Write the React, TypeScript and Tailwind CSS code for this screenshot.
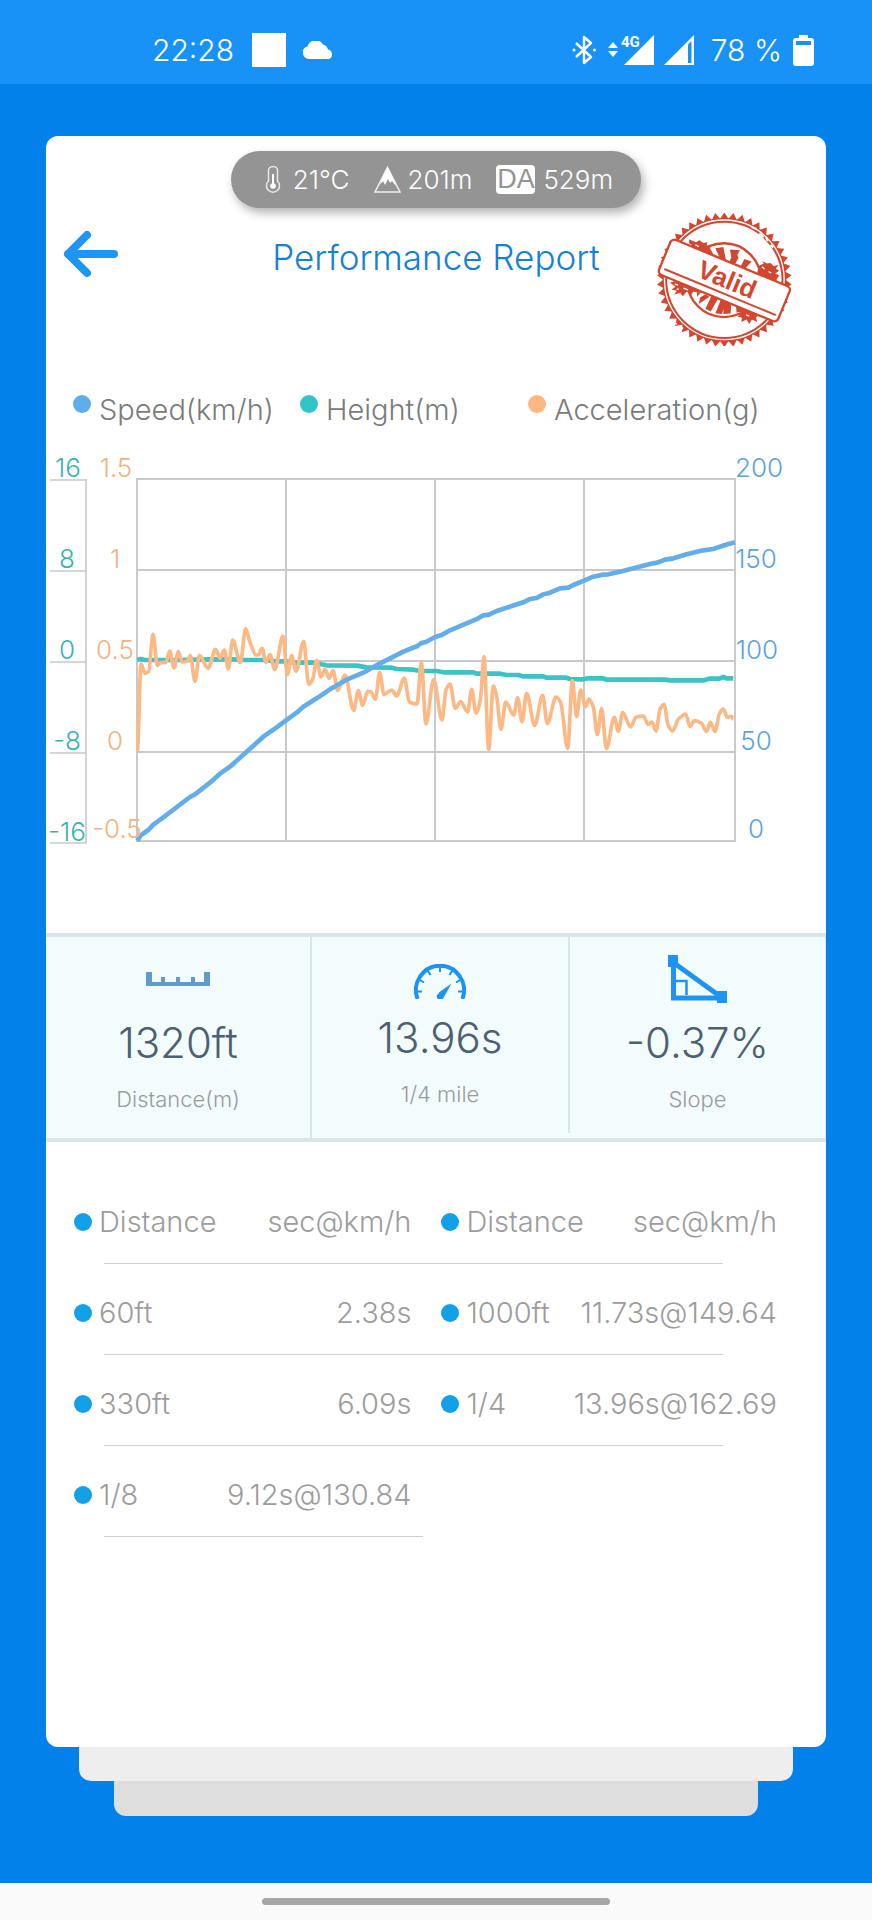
import React from "react";

type Point = [number, number];

const ACCELERATION: Point[] = [
  [22, 455], [33, 192], [45, 220], [56, 214], [69, 102], [82, 196], [92, 188], [108, 187], [119, 153], [132, 204],
  [145, 155], [157, 186], [172, 183], [181, 167], [195, 244], [208, 166], [234, 205], [257, 148], [270, 175],
  [283, 150], [295, 207], [308, 120], [331, 188], [347, 86], [360, 127], [378, 165], [386, 164], [396, 145],
  [408, 187], [420, 164], [434, 209], [459, 108], [472, 224], [485, 167], [498, 214], [521, 124], [536, 253],
  [548, 238], [560, 181], [573, 231], [585, 208], [598, 235], [609, 212], [623, 271], [645, 225], [671, 331],
  [685, 272], [698, 316], [713, 274], [723, 276], [736, 298], [749, 217], [762, 283], [785, 270], [800, 288],
  [823, 234], [838, 306], [861, 312], [874, 187], [888, 372], [911, 239], [936, 360], [948, 270], [960, 252],
  [976, 325], [992, 305], [1013, 336], [1025, 268], [1038, 339], [1051, 300], [1062, 170], [1076, 449], [1090, 258],
  [1100, 290], [1113, 388], [1127, 306], [1151, 345], [1163, 293], [1176, 365], [1190, 280], [1214, 376],
  [1238, 286], [1252, 371], [1278, 291], [1292, 308], [1313, 445], [1327, 242], [1340, 350], [1352, 270],
  [1366, 320], [1377, 297], [1390, 322], [1402, 404], [1415, 325], [1429, 446], [1453, 352], [1465, 394],
  [1478, 338], [1502, 381], [1518, 352], [1540, 348], [1554, 373], [1566, 366], [1578, 393], [1590, 328],
  [1602, 313], [1614, 374], [1628, 393], [1645, 358], [1667, 342], [1680, 380], [1693, 362], [1715, 370],
  [1729, 395], [1741, 367], [1755, 394], [1768, 342], [1780, 327], [1792, 352], [1804, 349], [1810, 357],
];

const HEIGHT: Point[] = [
  [22, 179], [32, 177], [45, 180], [150, 180], [240, 178], [320, 178], [345, 180], [400, 180], [440, 184], [468, 184],
  [490, 188], [550, 188], [590, 196], [680, 197], [710, 202], [785, 203], [800, 207], [850, 209], [870, 213],
  [920, 213], [940, 217], [1030, 217], [1040, 221], [1110, 221], [1130, 225], [1165, 225], [1178, 229],
  [1238, 229], [1250, 233], [1308, 233], [1320, 237], [1360, 238], [1375, 235], [1418, 235], [1430, 239],
  [1605, 239], [1620, 241], [1722, 241], [1738, 236], [1768, 236], [1780, 231], [1790, 235], [1810, 235],
];

const SPEED: Point[] = [
  [22, 722], [32, 706], [55, 690], [70, 674], [100, 652], [180, 591], [195, 583], [240, 548], [270, 521], [300, 500],
  [345, 460], [400, 410], [440, 382], [468, 361], [505, 334], [520, 320], [560, 295], [600, 268], [650, 239],
  [700, 218], [745, 193], [820, 155], [862, 138], [874, 129], [888, 126], [915, 111], [935, 105], [960, 91],
  [1045, 55], [1060, 46], [1077, 44], [1100, 33], [1180, 7], [1200, -3], [1220, -6], [1240, -17], [1255, -20],
  [1290, -35], [1315, -37], [1330, -45], [1362, -58], [1390, -70], [1418, -76], [1435, -77], [1470, -85],
  [1560, -108], [1582, -112], [1605, -121], [1630, -125], [1670, -137], [1720, -149], [1750, -153],
  [1785, -165], [1815, -173],
];

/* Monotone cubic through the samples: peaks stay peaks, nothing overshoots. */
function smooth(points: Point[]): string {
  const slope = (a: Point, b: Point) => (b[1] - a[1]) / (b[0] - a[0]);
  const tangents = points.map((p, i) => {
    if (i === 0 || i === points.length - 1) return 0;
    const s0 = slope(points[i - 1], p);
    const s1 = slope(p, points[i + 1]);
    return s0 * s1 <= 0 ? 0 : (2 * s0 * s1) / (s0 + s1);
  });
  let d = `M${points[0][0]} ${points[0][1]}`;
  for (let i = 1; i < points.length; i++) {
    const [x0, y0] = points[i - 1];
    const [x1, y1] = points[i];
    const h = (x1 - x0) / 3;
    d += `C${x0 + h} ${y0 + tangents[i - 1] * h} ${x1 - h} ${y1 - tangents[i] * h} ${x1} ${y1}`;
  }
  return d;
}

function straight(points: Point[]): string {
  return "M" + points.map((p) => p.join(" ")).join("L");
}

const HEIGHT_TICKS: [string, number, number][] = [
  ["16", 68, 477], ["8", 67, 568], ["0", 67, 659], ["-8", 67, 750], ["-16", 67, 841],
];
const G_TICKS: [string, number, number][] = [
  ["1.5", 116, 477], ["1", 115, 568], ["0.5", 115, 659], ["0", 115, 750], ["-0.5", 117, 838],
];
const SPEED_TICKS: [string, number, number][] = [
  ["200", 759, 477], ["150", 756, 568], ["100", 757, 659], ["50", 756, 750], ["0", 756, 838],
];

function Chart() {
  return (
    <svg viewBox="46 450 780 400" className="mt-5 block w-full" role="img" aria-label="Speed, height and acceleration">
      <g stroke="#c9c9c9" strokeWidth="2" fill="none">
        <path d="M137 479H735M137 570H735M137 661H735M137 752H735M137 841H736" />
        <path d="M137 478V842M286 479V841M435 479V841M584 479V841M735 478V842" />
        <path d="M50 480H86M50 571H86M50 662H86M50 753H86M50 843H87M86 479V843" strokeWidth="1.6" />
      </g>
      <g transform="translate(130 600) scale(0.33333)" fill="none" strokeLinejoin="round">
        <path d={straight(HEIGHT)} stroke="#3cc3c3" strokeWidth="14" />
        <path d={smooth(ACCELERATION)} stroke="#fcb985" strokeWidth="11" />
        <path d={straight(SPEED)} stroke="#63ade8" strokeWidth="14" />
      </g>
      <g fontSize="26" textAnchor="middle" fontWeight="300">
        {HEIGHT_TICKS.map(([t, x, y]) => (
          <text key={t} x={x} y={y} fill="#37b4ac">{t}</text>
        ))}
        {G_TICKS.map(([t, x, y]) => (
          <text key={t} x={x} y={y} fill="#f3b27e">{t}</text>
        ))}
        {SPEED_TICKS.map(([t, x, y]) => (
          <text key={t} x={x} y={y} fill="#5ba3dc">{t}</text>
        ))}
      </g>
    </svg>
  );
}

function polar(r: number, deg: number): string {
  const a = (deg * Math.PI) / 180;
  return `${(253 + r * Math.cos(a)).toFixed(1)} ${(237 + r * Math.sin(a)).toFixed(1)}`;
}

const TEETH = 46;
const teethPath =
  "M" +
  Array.from({ length: TEETH }, (_, i) => {
    const a = (i * 360) / TEETH;
    return `${polar(184, a)}L${polar(203, a + 180 / TEETH)}`;
  }).join("L") +
  "Z";

function Stamp() {
  const red = "#d2472f";
  return (
    <svg viewBox="48 36 411 400" className="h-[133px] w-[137px]" role="img" aria-label="Valid">
      <path d={teethPath} fill={red} />
      <circle cx="253" cy="237" r="186" fill={red} />
      <circle cx="253" cy="237" r="180" fill="none" stroke="#fff" strokeWidth="4" />
      <circle cx="253" cy="237" r="172" fill="#fff" />
      <circle cx="252" cy="238" r="111" fill="none" stroke={red} strokeWidth="7" />
      <g fill={red}>
        <path d="M226 142l24-4 8 40-16 0zM270 146l30 2-8 14 4 8-12 22-18-4 8-18zM313 174l22 8-24 26-12-4zM196 146l12-8 16 30-14-6z" />
        <path d="M180 290l16-10 12 8-32 22zM214 286l20 8-22 38-16-8zM242 298l16 4-12 38-20-2zM252 302l22 2 -2 34-22 2zM170 276l14-4-12 16zM288 316l14 4 2 12-14 4z" />
        <path d="M148 116l20 8 10-6 12 8 12-2-2 10 14 4-16 8 18 18-26-6-20-10-22-10 8-6-10-6z" />
        <path d="M352 214l6-20 14-6-6-8 16 8 10-2 10 10 14-4-8 12 10 6-12 8 12 6-8 12 4 12-30-10z" />
        <path d="M90 246l20-8 44 16 30 12-10 10-14-4-8 12-12-12-12 14-8-10-18 6 8-12-16-4 12-8z" />
        <path d="M300 322l40 6 18 14-10 8 4 14-16-8-8 14-8-14-16 8 2-14-14-2 10-8z" />
      </g>
      <path d="M104 250l10 3M130 262l14 5M166 132l10 5M366 198l8 6M386 212l8 5M318 342l10 4M110 264l6 2" stroke="#fff" strokeWidth="4" />
      <path d="M335 78l14 6M358 98l14 10M378 108l6 12M392 132l8 8M100 366l10 4M122 388l6-8" stroke="#fff" strokeWidth="6" />
      <g transform="rotate(22.5 253 239)">
        <rect x="59" y="182" width="388" height="114" rx="13" fill="#fff" stroke={red} strokeWidth="7" />
        <path d="M73 276H436" stroke={red} strokeWidth="6" />
        <text x="260" y="260" textAnchor="middle" fontFamily="'Liberation Sans', Arial, sans-serif" fontWeight="700" fontSize="78" fill={red}>
          Valid
        </text>
      </g>
    </svg>
  );
}

function StatusBar() {
  return (
    <header className="flex h-[84px] items-center justify-between bg-[#1992f7] pr-[58px] pl-[152px] pt-4 text-[30px] text-white">
      <div className="flex items-center">
        <time>22:28</time>
        <span className="ml-[18px] size-[34px] bg-white" />
        <svg viewBox="0 0 32 18" className="ml-4 h-[18px] w-8" fill="#fff" aria-hidden="true">
          <path d="M7 18a6.5 6.500 0 0 1-1.500-12.700A8.500 8.500 0 0 1 21 3.500a7 7 0 0 1 5 5A5 5 0 0 1 27 18z" />
        </svg>
      </div>
      <div className="flex items-center">
        <svg viewBox="0 0 24 30" className="h-[30px] w-6" fill="none" stroke="#fff" strokeWidth="2.400" aria-hidden="true">
          <path d="M4 8l15 14-7 6V2l7 6L4 22" strokeLinejoin="round" />
          <circle cx="2" cy="15" r="1.500" fill="#fff" stroke="none" />
          <circle cx="22.500" cy="15" r="1.500" fill="#fff" stroke="none" />
        </svg>
        <svg viewBox="0 -4 46 34" className="-mt-1 ml-3 h-[34px] w-[46px]" fill="#fff" aria-label="4G">
          <path d="M0 13l5-6 5 6zM0 16h10l-5 6zM16 30L46 0V30z" />
          <text x="13" y="12" fontSize="15" fontWeight="700" fontFamily="Roboto, sans-serif">4G</text>
        </svg>
        <svg viewBox="0 0 30 30" className="ml-[10px] size-[30px]" aria-hidden="true">
          <path d="M0 30L30 0V30z" fill="#fff" />
          <path d="M24 9.500l3.500-3.500V28H24z" fill="#1992f7" />
        </svg>
        <span className="ml-[17px]">78 %</span>
        <svg viewBox="0 0 21 31" className="ml-[11px] h-[31px] w-[21px]" aria-hidden="true">
          <path d="M6 0h9v3h3a3 3 0 0 1 3 3v22a3 3 0 0 1-3 3H3a3 3 0 0 1-3-3V6a3 3 0 0 1 3-3h3z" fill="#fff" />
          <path d="M3 6h15v4H3z" fill="#1992f7" />
        </svg>
      </div>
    </header>
  );
}

function Conditions() {
  return (
    <div className="mx-auto mt-[15px] flex h-[57px] items-center rounded-full bg-[#949494] pr-7 pl-[34px] text-[26px] text-white shadow-[3px_5px_10px_rgba(0,0,0,0.3)]">
      <svg viewBox="0 0 16 27" className="mr-3 h-[27px] w-4" fill="none" stroke="#e8e8e8" strokeWidth="1.500" aria-hidden="true">
        <path d="M3.500 4.500a4.500 4 0 0 1 9 0V15a6.500 6.500 0 1 1-9 0z" />
        <path d="M8 8v12" strokeWidth="2" stroke="#fff" />
        <circle cx="8" cy="20" r="2.800" fill="#fff" stroke="none" />
      </svg>
      <span>21℃</span>
      <svg viewBox="0 0 27 27" className="mr-[7px] ml-6 size-[27px]" aria-hidden="true">
        <path d="M13.500 1.500L26 26H1z" fill="none" stroke="#eee" strokeWidth="1.600" />
        <path d="M13.500 1L20 14l2 6-4-5-2 2-2-4-3 6-2-4-3 4 2-6z" fill="#fff" />
      </svg>
      <span>201m</span>
      <span className="mr-2 ml-6 flex h-[29px] w-[39px] items-center justify-center rounded-[4px] bg-white font-['Liberation_Sans',Arial,sans-serif] text-[27px] font-normal text-[#949494]">
        DA
      </span>
      <span>529m</span>
    </div>
  );
}

function LegendItem({ dot, label }: { dot: string; label: string }) {
  return (
    <li className="flex items-start gap-2 whitespace-nowrap">
      <span className={`mt-[5px] size-[18px] shrink-0 rounded-full ${dot}`} />
      <span className="leading-10">{label}</span>
    </li>
  );
}

function Stat({ icon, value, label, className }: { icon: React.ReactNode; value: string; label: string; className: string }) {
  return (
    <div className={`flex flex-col items-center ${className}`}>
      {icon}
      <div className="text-[42px] leading-[52px] text-[#4e6070]">{value}</div>
      <div className="mt-4 text-[22px] leading-7 text-[#9b9b9b]">{label}</div>
    </div>
  );
}

const RESULTS = [
  ["60ft", "2.38s", "1000ft", "11.73s@149.64"],
  ["330ft", "6.09s", "1/4", "13.96s@162.69"],
  ["1/8", "9.12s@130.84"],
];

function Name({ children }: { children: React.ReactNode }) {
  return (
    <span className="flex items-center gap-[7px]">
      <span className="size-[18px] shrink-0 rounded-full bg-[#12a0e6]" />
      {children}
    </span>
  );
}

function ResultCells({ cells, head }: { cells: string[]; head?: boolean }) {
  return (
    <>
      {cells.map((c, i) => {
        const cls =
          i % 2 ? "pt-[6px] text-right font-light" : i === 2 ? "pt-[6px] pl-[30px] text-left font-light" : "pt-[6px] text-left font-light";
        const body = i % 2 ? c : <Name>{c}</Name>;
        return head ? <th key={i} scope="col" className={cls}>{body}</th> : <td key={i} className={cls}>{body}</td>;
      })}
    </>
  );
}

const ROW = "relative h-[91px] after:absolute after:bottom-0 after:left-[30px] after:h-px after:bg-[#cfcfcf]";

export default function App() {
  return (
    <div className="flex min-h-screen flex-col bg-[#0281ea] font-['Inter','Liberation_Sans',sans-serif] font-light">
      <StatusBar />
      <main className="mx-[46px] mt-[52px] flex flex-1 flex-col rounded-xl bg-white">
        <Conditions />
        <div className="mt-[5px] grid grid-cols-[1fr_auto_1fr] items-start">
          <button type="button" aria-label="Back" className="mt-[17px] ml-[17px] justify-self-start">
            <svg viewBox="0 0 56 48" className="h-12 w-14" fill="none" stroke="#1f95f5" strokeWidth="8" strokeLinecap="round" strokeLinejoin="round" aria-hidden="true">
              <path d="M24 5L5 24l19 19M5 24h46" />
            </svg>
          </button>
          <h1 className="mt-6 text-[35px] leading-[40px] text-[#1580d8]">Performance Report</h1>
          <div className="mr-[33px] justify-self-end">
            <Stamp />
          </div>
        </div>

        <ul className="mt-[44px] grid grid-cols-[227px_228px_1fr] pl-[27px] text-[29px] text-[#7b7b7b]">
          <LegendItem dot="bg-[#5eaeec]" label="Speed(km/h)" />
          <LegendItem dot="bg-[#30c5c8]" label="Height(m)" />
          <LegendItem dot="bg-[#fdb882]" label="Acceleration(g)" />
        </ul>
        <Chart />

        <section className="mt-[83px] grid h-[209px] grid-cols-[266fr_258fr_256fr] border-y-4 border-[#dae5e7] bg-[#f2fcfd]">
          <Stat
            className="border-r-2 border-[#dae5e7] pt-[35px]"
            value="1320ft"
            label="Distance(m)"
            icon={
              <svg viewBox="0 0 64 14" className="mb-[31px] h-[14px] w-16" fill="#5f9ad0" aria-hidden="true">
                <path d="M0 0h6v10h9V5h4v5h11V5h4v5h11V5h4v5h9V0h6v14H0z" />
              </svg>
            }
          />
          <Stat
            className="mb-[5px] border-r-2 border-[#dae5e7] pt-[27px]"
            value="13.96s"
            label="1/4 mile"
            icon={
              <svg viewBox="0 0 52 35" className="mb-[13px] h-[35px] w-[52px]" fill="none" stroke="#1d94f3" aria-hidden="true">
                <path d="M3.600 35A24 24.500 0 1 1 48.400 35" strokeWidth="4" />
                <path d="M4 27.500h4M44 27.500h4M6 16l4 2.500M46 16l-4 2.500M14 7l2.500 4M38 7l-2.500 4M26 3v5" strokeWidth="2" />
                <path d="M37.500 19.500L30 33 28.500 35h-5l-1-3 3-4z" fill="#1d94f3" stroke="none" />
              </svg>
            }
          />
          <Stat
            className="border-r border-[#dae5e7] pt-[18px]"
            value="-0.37%"
            label="Slope"
            icon={
              <svg viewBox="0 0 59 48" className="mb-[14px] h-12 w-[59px]" fill="none" stroke="#1d94f3" aria-hidden="true">
                <path d="M5.500 8V43H52" strokeWidth="5" />
                <path d="M6 8L53 42" strokeWidth="5" />
                <path d="M7 26H18.500V40" strokeWidth="2.500" />
                <path d="M0 0h10v12H0zM49 36h10v12H49z" fill="#1d94f3" stroke="none" />
              </svg>
            }
          />
        </section>

        <div className="mt-[31px] pr-[49px] pl-7">
          <table className="w-full table-fixed text-[29px] whitespace-nowrap text-[#9c9c9c]">
            <colgroup>
              <col className="w-[19%]" />
              <col className="w-[29%]" />
              <col className="w-[23%]" />
              <col className="w-[29%]" />
            </colgroup>
            <thead>
              <tr className={`${ROW} after:right-[54px]`}>
                <ResultCells head cells={["Distance", "sec@km/h", "Distance", "sec@km/h"]} />
              </tr>
            </thead>
            <tbody>
              {RESULTS.map((cells) => (
                <tr key={cells[0]} className={cells.length > 2 ? `${ROW} after:right-[54px]` : `${ROW} after:right-[354px]`}>
                  <ResultCells cells={cells} />
                </tr>
              ))}
            </tbody>
          </table>
        </div>
      </main>
      <div className="mx-[79px] h-[34px] rounded-b-xl bg-[#eeeeee]" />
      <div className="mx-[114px] h-[35px] rounded-b-xl bg-[#dedede]" />
      <footer className="mt-[67px] flex h-[37px] items-center justify-center bg-[#fafafa]">
        <span className="h-[7px] w-[40%] rounded-full bg-[#a6a6a6]" />
      </footer>
    </div>
  );
}
